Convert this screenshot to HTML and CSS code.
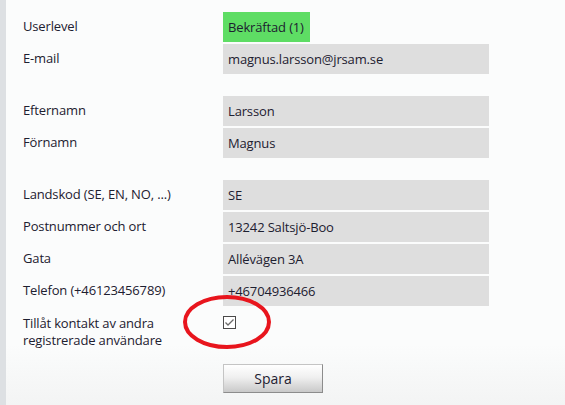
FILE: index.html
```html
<!DOCTYPE html>
<html lang="sv">
<head>
    <meta charset="UTF-8">
    <title>Profil</title>
    <link rel="stylesheet" href="styles.css">
</head>
<body>
    <div class="side"></div>
    <main class="page">
        <form class="profile">
            <div class="label">Userlevel</div>
            <div class="value level">Bekräftad (1)</div>

            <div class="label">E-mail</div>
            <div class="value">magnus.larsson@jrsam.se</div>

            <div class="spacer"></div>

            <div class="label">Efternamn</div>
            <div class="value">Larsson</div>

            <div class="label">Förnamn</div>
            <div class="value">Magnus</div>

            <div class="spacer"></div>

            <div class="label">Landskod (SE, EN, NO, ...)</div>
            <div class="value">SE</div>

            <div class="label">Postnummer och ort</div>
            <div class="value">13242 Saltsjö-Boo</div>

            <div class="label">Gata</div>
            <div class="value">Allévägen 3A</div>

            <div class="label">Telefon (+46123456789)</div>
            <div class="value">+46704936466</div>

            <div class="label multi">Tillåt kontakt av andra<br>registrerade användare</div>
            <div class="check-cell">
                <span class="checkbox">
                    <svg width="13" height="13" viewBox="0 0 13 13">
                        <rect x="0.5" y="0.5" width="12" height="12" fill="#fff" stroke="#4a4a4a"/>
                        <path d="M2.5 6.5 L5 9 L10.5 3.5" fill="none" stroke="#6a6a6a" stroke-width="1.3"/>
                    </svg>
                </span>
                <svg class="circle" width="96" height="62" viewBox="0 0 96 62">
                    <ellipse cx="46" cy="29" rx="42" ry="25" fill="none" stroke="#e8151d" stroke-width="4"/>
                </svg>
            </div>

            <div class="submit-cell">
                <button type="button" class="save">Spara</button>
            </div>
        </form>
    </main>
</body>
</html>
```

FILE: styles.css
```css
body {
    margin: 0;
    padding: 0;
    font-family: "Open Sans", Arial, sans-serif;
    font-size: 13px;
    letter-spacing: -0.15px;
    color: #1d2030;
    background-color: #fbfcfc;
    display: flex;
    height: 405px;
    overflow: hidden;
}
.side {
    width: 6px;
    background-color: #dde0e3;
    flex-shrink: 0;
}
.page {
    flex: 1;
    padding: 12px 0 0 17px;
    background: linear-gradient(to bottom, #fbfcfc 85%, #f3f4f4 100%);
}
.profile {
    display: grid;
    grid-template-columns: 200px 266px;
    row-gap: 2px;
}
.label {
    height: 30px;
    display: flex;
    align-items: center;
    padding-bottom: 2px;
    box-sizing: border-box;
}
.label.multi {
    height: auto;
    line-height: 17px;
    padding: 7px 0 0;
    align-items: flex-start;
}
.value {
    height: 30px;
    background-color: #dedede;
    display: flex;
    align-items: center;
    padding-left: 5px;
}
.value.level {
    background-color: #5edd64;
    justify-self: start;
    padding-right: 6px;
}
.spacer {
    grid-column: 1 / 3;
    height: 18px;
}
.check-cell {
    position: relative;
    padding-top: 8px;
}
.checkbox {
    display: block;
    width: 13px;
    height: 13px;
}
.checkbox svg {
    display: block;
}
.circle {
    position: absolute;
    left: -42px;
    top: -15px;
}
.submit-cell {
    grid-column: 2;
    margin-top: 13px;
}
.save {
    width: 100px;
    height: 29px;
    font-family: "Open Sans", Arial, sans-serif;
    font-size: 14px;
    color: #1d2030;
    background: linear-gradient(to bottom, #ffffff 0%, #f0f0f0 45%, #c9c9c9 100%);
    border: 1px solid #c4c4c4;
    border-right-color: #8c8c8c;
    border-bottom-color: #8c8c8c;
    border-radius: 0;
    padding: 0;
    cursor: pointer;
}
```
